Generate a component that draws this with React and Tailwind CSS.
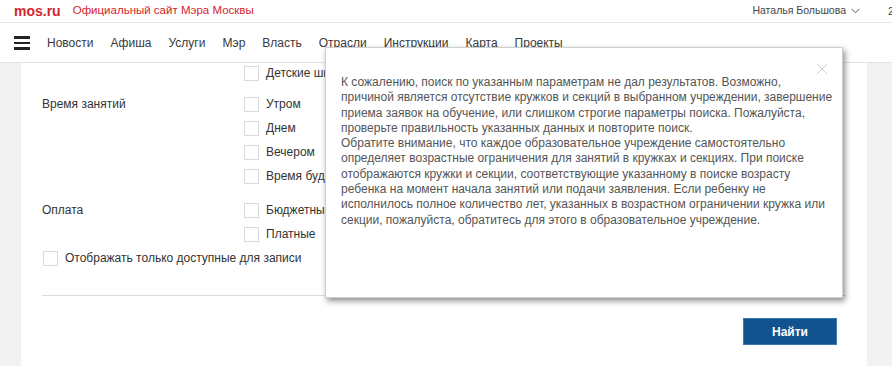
import React from "react";

const navItems = ["Новости", "Афиша", "Услуги", "Мэр", "Власть", "Отрасли", "Инструкции", "Карта", "Проекты"];

const modalLines = [
  "К сожалению, поиск по указанным параметрам не дал результатов. Возможно,",
  "причиной является отсутствие кружков и секций в выбранном учреждении, завершение",
  "приема заявок на обучение, или слишком строгие параметры поиска. Пожалуйста,",
  "проверьте правильность указанных данных и повторите поиск.",
  "Обратите внимание, что каждое образовательное учреждение самостоятельно",
  "определяет возрастные ограничения для занятий в кружках и секциях. При поиске",
  "отображаются кружки и секции, соответствующие указанному в поиске возрасту",
  "ребенка на момент начала занятий или подачи заявления. Если ребенку не",
  "исполнилось полное количество лет, указанных в возрастном ограничении кружка или",
  "секции, пожалуйста, обратитесь для этого в образовательное учреждение.",
];

function Box() {
  return <span className="h-[15px] w-[15px] shrink-0 border border-[#d9d9d9] bg-white" />;
}

function Option({ label, h = "h-[24px]" }) {
  return (
    <div className={`flex items-center gap-[7px] ${h}`}>
      <Box />
      <span className="whitespace-nowrap">{label}</span>
    </div>
  );
}

export default function App() {
  return (
    <div className="relative h-[366px] w-[892px] overflow-hidden bg-white font-['Liberation_Sans',Arial,sans-serif] text-[12px] text-[#333]">
      {/* top bar */}
      <header className="flex h-[23px] items-center border-b border-[#e6e6e6] pl-[14px]">
        <span className="text-[14px] font-bold text-[#d3242d]">mos.ru</span>
        <span className="ml-[12px] text-[11.5px] text-[#d3242d]">Официальный сайт Мэра Москвы</span>
        <span className="ml-auto mr-[28px] flex items-center gap-[5px] text-[10.5px] text-[#444]">
          Наталья Большова
          <svg width="9" height="6" viewBox="0 0 9 6" fill="none" stroke="#555" strokeWidth="1">
            <path d="M0.5 0.8 L4.5 4.8 L8.5 0.8" />
          </svg>
        </span>
        <span className="w-[4px] overflow-hidden text-[11px] text-[#444]">2</span>
      </header>

      {/* nav */}
      <nav className="flex h-[40px] items-center border-b border-[#e2e2e2] pl-[14px] pt-px text-[12px] text-[#3a3a3a]">
        <span className="mr-[17px] flex w-[16px] flex-col gap-[3px]">
          <span className="h-[2.5px] bg-[#222]" />
          <span className="h-[2.5px] bg-[#222]" />
          <span className="h-[2.5px] bg-[#222]" />
        </span>
        <div className="flex gap-[17px]">
          {navItems.map((item) => (
            <span key={item}>{item}</span>
          ))}
        </div>
      </nav>

      {/* page */}
      <div className="flex h-[303px]">
        <div className="w-[21px] bg-[#f2f2f2]" />
        <main className="flex-1 bg-white px-[21px]">
          <div className="flex">
            <div className="w-[202px]" />
            <div className="w-[81px] overflow-hidden">
              <Option label="Детские школы искусств" h="h-[20px]" />
            </div>
          </div>

          <div className="mt-[9px] flex">
            <div className="flex h-[24px] w-[202px] items-center">Время занятий</div>
            <div className="w-[81px] overflow-hidden">
              <Option label="Утром" />
              <Option label="Днем" />
              <Option label="Вечером" />
              <Option label="Время будет уточнено" />
            </div>
          </div>

          <div className="mt-[10px] flex">
            <div className="flex h-[24px] w-[202px] items-center">Оплата</div>
            <div className="w-[81px] overflow-hidden">
              <Option label="Бюджетные" />
              <Option label="Платные" />
            </div>
          </div>

          <div className="pl-px">
            <Option label="Отображать только доступные для записи" />
          </div>

          <div className="mt-[25px] border-t border-[#dcdcdc]" />

          <div className="mt-[22px] flex justify-end pr-[9px]">
            <button className="h-[27px] w-[94px] border border-[#3b79b6] bg-[#10538f] text-[12px] font-bold text-white">
              Найти
            </button>
          </div>
        </main>
        <div className="w-[25px] bg-[#f2f2f2]" />
      </div>

      {/* dialog */}
      <div className="absolute left-[325px] top-[47px] h-[251px] w-[518px] border border-[#cfcfcf] bg-white pl-[15px] pt-[27px] text-[12px] leading-[15.3px] text-[#555] shadow-[2px_3px_6px_rgba(0,0,0,0.45)]">
        <svg className="absolute right-[14px] top-[15px]" width="12" height="12" viewBox="0 0 12 12" stroke="#cfcfcf" strokeWidth="1">
          <path d="M0.5 0.5 L11.5 11.5 M11.5 0.5 L0.5 11.5" />
        </svg>
        {modalLines.map((line) => (
          <div key={line} className="whitespace-nowrap">
            {line}
          </div>
        ))}
      </div>
    </div>
  );
}
